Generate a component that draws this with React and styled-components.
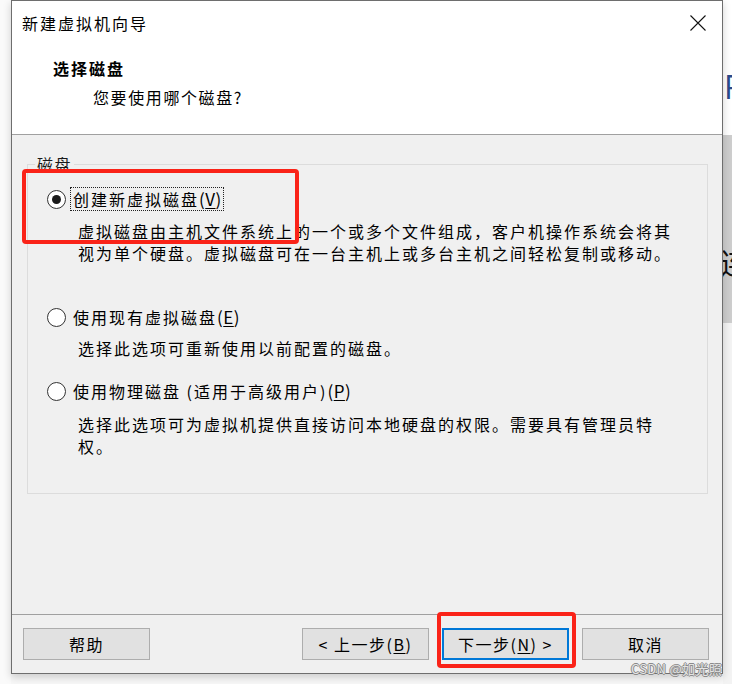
import React from "react";
import styled, { createGlobalStyle } from "styled-components";

const GlobalStyle = createGlobalStyle`
	html, body {
		margin: 0;
		padding: 0;
		background: #f7f7f7;
	}
	body {
		font-family: "Noto Sans CJK SC", "Noto Sans", sans-serif;
		font-size: 16px;
		color: #000;
	}
`;

const Page = styled.div`
	position: relative;
	display: flex;
	width: 732px;
	height: 684px;
	overflow: hidden;
	background: #f7f7f7;
`;

const Gutter = styled.div`
	width: 11px;
	flex-shrink: 0;
	background: #fafafa;
`;

const Window = styled.div`
	width: 712px;
	height: 674px;
	flex-shrink: 0;
	box-sizing: border-box;
	border: 1px solid #6e6e6e;
	background: #f0f0f0;
	display: flex;
	flex-direction: column;
	box-shadow: 0 3px 8px rgba(0, 0, 0, 0.18);
	position: relative;
	z-index: 1;
`;

const TopArea = styled.div`
	height: 134px;
	box-sizing: border-box;
	background: #fff;
	border-bottom: 1px solid #a0a0a0;
`;

const TitleBar = styled.div`
	height: 43px;
	display: flex;
	align-items: center;
	justify-content: space-between;
	padding: 0 16px 0 10px;
`;

const Title = styled.span`
	font-size: 16px;
	letter-spacing: 2px;
	line-height: 22px;
`;

const CloseIcon = () => (
	<svg width="16" height="16" viewBox="0 0 16 16">
		<path d="M0.5 0.5 L15.5 15.5 M15.5 0.5 L0.5 15.5" stroke="#111" strokeWidth="1.1" fill="none" />
	</svg>
);

const Header = styled.div`
	padding: 13px 0 0 41px;
`;

const Heading = styled.div`
	font-weight: 700;
	line-height: 22px;
	letter-spacing: 2px;
`;

const SubHeading = styled.div`
	margin-top: 7px;
	padding-left: 40px;
	line-height: 22px;
	letter-spacing: 1.6px;
`;

const Body = styled.div`
	flex: 1;
	padding: 18px 14px 0 15px;
`;

const GroupBox = styled.fieldset`
	margin: 0;
	min-width: 0;
	padding: 12px 0 36px 19px;
	border: 1px solid #dcdcdc;
`;

const Legend = styled.legend`
	margin-left: -12px;
	padding: 0 2px;
	line-height: 22px;
	letter-spacing: 1.5px;
	color: #1a1a1a;
`;

const Option = styled.div`
	margin-top: ${(props) => props.$top || 0}px;
`;

const OptionRow = styled.div`
	display: flex;
	align-items: center;
	gap: 5px;
	height: 24px;
`;

const Radio = styled.span`
	width: 19px;
	height: 19px;
	box-sizing: border-box;
	border-radius: 50%;
	border: 1px solid #333;
	background: #fff;
	display: flex;
	align-items: center;
	justify-content: center;
	&::after {
		content: "";
		width: 9px;
		height: 9px;
		border-radius: 50%;
		background: #1a1a1a;
		display: ${(props) => (props.$checked ? "block" : "none")};
	}
`;

const Label = styled.span`
	line-height: 21px;
	padding: 0 1px 0 2px;
	letter-spacing: 2px;
	outline: ${(props) => (props.$focused ? "1px dotted #222" : "none")};
`;

const Mnemonic = styled.span`
	letter-spacing: 0.5px;
	font-size: 17px;
	u {
		text-decoration-thickness: 1px;
		text-underline-offset: 2px;
	}
`;

const Description = styled.div`
	margin: ${(props) => props.$gap || 8}px 0 0 31px;
	width: 600px;
	line-height: 22px;
	letter-spacing: 2px;
`;

const Footer = styled.div`
	height: 59px;
	box-sizing: border-box;
	border-top: 1px solid #a0a0a0;
	padding: 13px 13px 0 11px;
	display: flex;
	align-items: flex-start;
	gap: 13px;
`;

const Spacer = styled.div`
	flex: 1;
`;

const Button = styled.button`
	width: 127px;
	height: 32px;
	box-sizing: border-box;
	background: #e1e1e1;
	border: ${(props) => (props.$primary ? "2px solid #0078d7" : "1px solid #adadad")};
	font-family: inherit;
	font-size: 16px;
	letter-spacing: 1.5px;
	color: #000;
	padding: 0;
	u {
		text-underline-offset: 2px;
	}
`;

const RightStrip = styled.div`
	flex: 1;
	display: flex;
	flex-direction: column;
	overflow: hidden;
`;

const PeekTop = styled.div`
	height: 135px;
	background: #fff;
	padding: 70px 0 0 1px;
	box-sizing: border-box;
	font-family: "Open Sans", sans-serif;
	font-size: 32px;
	line-height: 34px;
	color: #2b4a8b;
`;

const PeekMid = styled.div`
	height: 188px;
	background: #cdcdcd;
	padding-top: 111px;
	box-sizing: border-box;
	font-size: 29px;
	line-height: 32px;
	white-space: nowrap;
	color: #111;
	span {
		margin-left: -3px;
	}
`;

const PeekBottom = styled.div`
	flex: 1;
	background: #f3f3f3;
`;

const Annotation = styled.div`
	position: absolute;
	left: ${(props) => props.$x}px;
	top: ${(props) => props.$y}px;
	width: ${(props) => props.$w}px;
	height: ${(props) => props.$h}px;
	box-sizing: border-box;
	border: 4px solid #fa2318;
	border-radius: 4px;
	z-index: 2;
	pointer-events: none;
`;

const Watermark = styled.div`
	position: absolute;
	right: 10px;
	top: 659px;
	z-index: 3;
	font-size: 13px;
	letter-spacing: 0.3px;
	color: #e4e4e4;
	text-shadow: 1px 0 0 #8a8a8a, -1px 0 0 #8a8a8a, 0 1px 0 #8a8a8a, 0 -1px 0 #8a8a8a;
`;

const options = [
	{
		label: "创建新虚拟磁盘",
		key: "V",
		checked: true,
		top: 0,
		gap: 9,
		desc: "虚拟磁盘由主机文件系统上的一个或多个文件组成，客户机操作系统会将其视为单个硬盘。虚拟磁盘可在一台主机上或多台主机之间轻松复制或移动。",
	},
	{
		label: "使用现有虚拟磁盘",
		key: "E",
		top: 41,
		gap: 8,
		desc: "选择此选项可重新使用以前配置的磁盘。",
	},
	{
		label: "使用物理磁盘 (适用于高级用户)",
		key: "P",
		top: 20,
		gap: 10,
		desc: "选择此选项可为虚拟机提供直接访问本地硬盘的权限。需要具有管理员特权。",
	},
];

const App = () => {
	return (
		<Page>
			<GlobalStyle />
			<Gutter />
			<Window>
				<TopArea>
					<TitleBar>
						<Title>新建虚拟机向导</Title>
						<CloseIcon />
					</TitleBar>
					<Header>
						<Heading>选择磁盘</Heading>
						<SubHeading>您要使用哪个磁盘?</SubHeading>
					</Header>
				</TopArea>
				<Body>
					<GroupBox>
						<Legend>磁盘</Legend>
						{options.map((item) => (
							<Option key={item.key} $top={item.top}>
								<OptionRow>
									<Radio $checked={item.checked} />
									<Label $focused={item.checked}>
										{item.label}
										<Mnemonic>
											(<u>{item.key}</u>)
										</Mnemonic>
									</Label>
								</OptionRow>
								<Description $gap={item.gap}>{item.desc}</Description>
							</Option>
						))}
					</GroupBox>
				</Body>
				<Footer>
					<Button>帮助</Button>
					<Spacer />
					<Button>
						&lt; 上一步(<u>B</u>)
					</Button>
					<Button $primary>
						下一步(<u>N</u>) &gt;
					</Button>
					<Button>取消</Button>
				</Footer>
			</Window>
			<RightStrip>
				<PeekTop>R</PeekTop>
				<PeekMid>
					<span>连</span>
				</PeekMid>
				<PeekBottom />
			</RightStrip>
			<Annotation $x={22} $y={169} $w={277} $h={75} />
			<Annotation $x={437} $y={612} $w={139} $h={56} />
			<Watermark>CSDN @如光照</Watermark>
		</Page>
	);
};

export default App;
